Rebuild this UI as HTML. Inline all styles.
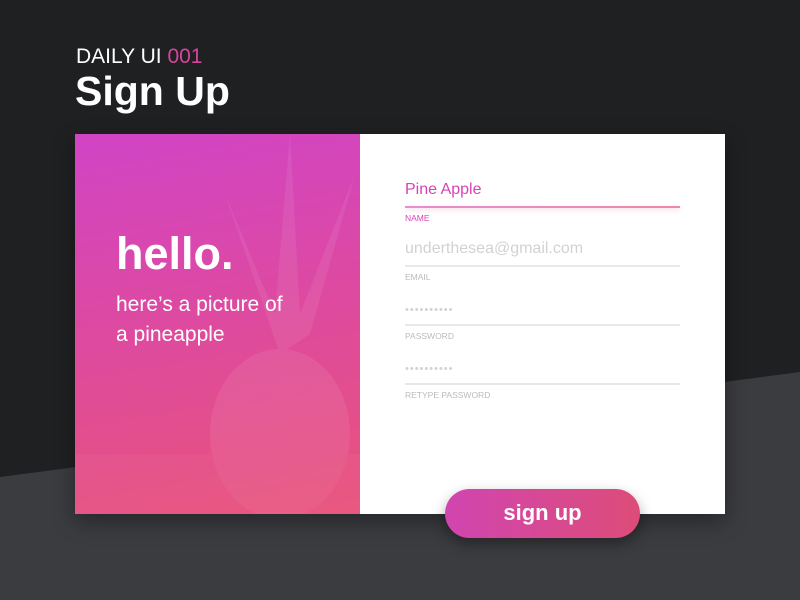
<!DOCTYPE html>
<html><head><style>
*{margin:0;padding:0;box-sizing:border-box}
body{width:800px;height:600px;overflow:hidden;background:#1f2022;font-family:"Liberation Sans",sans-serif;position:relative}
.bg2{position:absolute;inset:0;background:#3b3c40;clip-path:polygon(0 477px,800px 372px,800px 600px,0 600px)}
.t1{position:absolute;left:76px;top:45px;color:#fff;font-size:21px;font-weight:300}
.t1 span{color:#d9439b}
.t2{position:absolute;left:75px;top:68px;color:#fff;font-size:41px;font-weight:bold}
.card{position:absolute;left:75px;top:134px;width:650px;height:380px;background:#fff;box-shadow:0 8px 20px rgba(0,0,0,.35)}
.left{position:absolute;left:0;top:0;width:285px;height:380px;background:linear-gradient(170deg,#d144c6 0%,#de4a9e 50%,#e8537a 100%);overflow:hidden}
.hello{position:absolute;left:41px;top:94px;color:#fff;font-size:45px;font-weight:bold}
.sub{position:absolute;left:41px;top:156px;color:#fff;font-size:21px;line-height:30px}
.f{position:absolute;left:330px;width:275px}
.v{font-size:16px;color:#d2d2d2;height:22px}
.line{height:2px;background:#e8e8e8;margin-top:3px}
.lab{font-size:8.5px;color:#bbb;margin-top:5px}
.btn{position:absolute;left:445px;top:489px;width:195px;height:49px;border-radius:25px;background:linear-gradient(90deg,#d145b0,#dd4c78);color:#fff;font-size:22px;font-weight:bold;text-align:center;line-height:48px;box-shadow:0 6px 14px rgba(0,0,0,.35)}
</style></head><body>
<div class="bg2"></div>
<div class="t1">DAILY UI <span>001</span></div>
<div class="t2">Sign Up</div>
<div class="card">
<div class="left">
<svg width="285" height="380" style="position:absolute;left:0;top:0;opacity:.07">
<ellipse cx="205" cy="300" rx="70" ry="85" fill="#fff"/>
<path d="M205 220 L150 60 L200 180 L215 0 L225 180 L280 40 L235 200 Z" fill="#fff"/>
<rect x="0" y="320" width="285" height="60" fill="#fff" opacity=".4"/>
</svg>
<div class="hello">hello.</div>
<div class="sub">here’s a picture of<br>a pineapple</div>
</div>
<div class="f" style="top:47px"><div class="v" style="color:#d943b5">Pine Apple</div><div class="line" style="background:linear-gradient(90deg,#e68fcf,#ec8aa6);box-shadow:0 2px 4px rgba(230,100,160,.3)"></div><div class="lab" style="color:#d943b5">NAME</div></div>
<div class="f" style="top:106px"><div class="v">underthesea@gmail.com</div><div class="line"></div><div class="lab">EMAIL</div></div>
<div class="f" style="top:165px"><div class="v" style="font-size:11px;letter-spacing:1px;line-height:22px">••••••••••</div><div class="line"></div><div class="lab">PASSWORD</div></div>
<div class="f" style="top:224px"><div class="v" style="font-size:11px;letter-spacing:1px;line-height:22px">••••••••••</div><div class="line"></div><div class="lab">RETYPE PASSWORD</div></div>
</div>
<div class="btn">sign up</div>
</body></html>
